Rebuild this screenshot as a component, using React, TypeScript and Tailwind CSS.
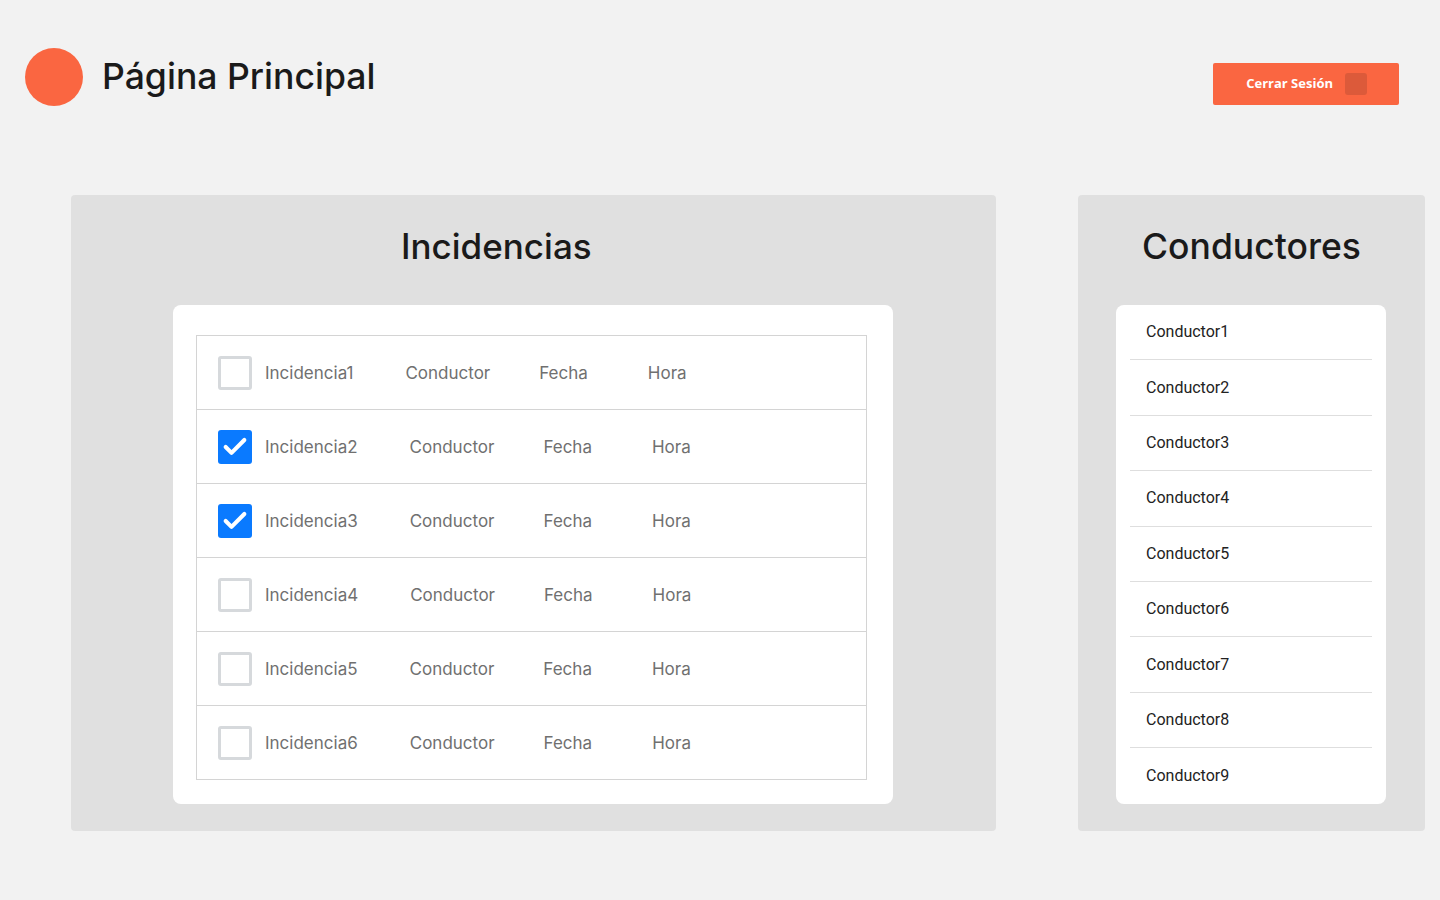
import { Check } from "lucide-react";

const INCIDENCIAS = [
  { name: "Incidencia1", checked: false },
  { name: "Incidencia2", checked: true },
  { name: "Incidencia3", checked: true },
  { name: "Incidencia4", checked: false },
  { name: "Incidencia5", checked: false },
  { name: "Incidencia6", checked: false },
];

const CONDUCTORES = Array.from({ length: 9 }, (_, i) => `Conductor${i + 1}`);

function Checkbox({ checked }: { checked: boolean }) {
  if (checked) {
    return (
      <span className="flex h-[34px] w-[34px] shrink-0 items-center justify-center rounded-[3px] bg-[#0a7aff]">
        <Check size={28} strokeWidth={3.5} className="text-white" />
      </span>
    );
  }
  return <span className="h-[34px] w-[34px] shrink-0 rounded-[3px] border-[3px] border-[#d6d9dc] bg-white" />;
}

export default function App() {
  return (
    <div className="min-h-[900px] bg-[#f2f2f2] font-['Inter',sans-serif]">
      {/* header */}
      <header className="flex items-start justify-between pl-[25px] pr-[41px] pt-[48px]">
        <div className="flex h-[57px] items-center gap-[19px]">
          <span className="h-[58px] w-[58px] rounded-full bg-[#fa6641]" />
          <h1 className="text-[35.6px] font-medium text-[#1a1a1a]">Página Principal</h1>
        </div>
        <button className="mt-[15px] flex h-[42px] w-[186px] items-center justify-end gap-[12px] rounded-[2px] bg-[#fa6641] pr-[32px] font-['Open_Sans',sans-serif] text-[13px] font-bold text-white">
          Cerrar Sesión
          <span className="h-[22px] w-[22px] rounded-[3px] bg-[#dc5a3a]" />
        </button>
      </header>

      <main className="mt-[90px] flex pl-[71px]">
        {/* Incidencias */}
        <section className="flex h-[636px] w-[925px] flex-col rounded-[4px] bg-[#e0e0e0]">
          <h2 className="ml-[330px] mt-[28px] text-[35px] font-medium leading-[46px] text-[#1a1a1a]">Incidencias</h2>
          <div className="ml-[102px] mt-[36px] w-[720px] rounded-[8px] bg-white pb-[24px] pl-[23px] pr-[26px] pt-[30px]">
            <div className="border border-b-0 border-[#d4d4d4]">
              {INCIDENCIAS.map((inc) => (
                <div key={inc.name} className="flex h-[74px] items-center border-b border-[#d4d4d4] pl-[21px] text-[17px] text-[#707070]">
                  <Checkbox checked={inc.checked} />
                  <span className="ml-[13px] mt-[3px]">{inc.name}</span>
                  <span className="ml-[52px] mt-[3px]">Conductor</span>
                  <span className="ml-[49px] mt-[3px]">Fecha</span>
                  <span className="ml-[60px] mt-[3px]">Hora</span>
                </div>
              ))}
            </div>
          </div>
        </section>

        {/* Conductores */}
        <section className="ml-[82px] flex h-[636px] w-[347px] flex-col rounded-[4px] bg-[#e0e0e0]">
          <h2 className="mt-[29px] self-center text-[35.5px] font-medium leading-[46px] text-[#1a1a1a]">Conductores</h2>
          <ul className="ml-[38px] mt-[35px] w-[270px] rounded-[8px] bg-white px-[14px] font-['Roboto',sans-serif] text-[16px] text-[#222]">
            {CONDUCTORES.map((c, i) => (
              <li
                key={c}
                className={`flex h-[55.4px] items-center pl-[16px] ${i < CONDUCTORES.length - 1 ? "border-b border-[#dedede]" : ""}`}
              >
                {c}
              </li>
            ))}
          </ul>
        </section>
      </main>
    </div>
  );
}
